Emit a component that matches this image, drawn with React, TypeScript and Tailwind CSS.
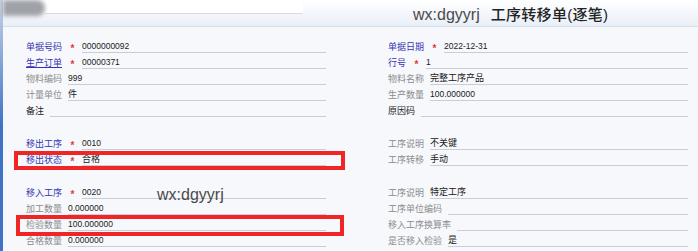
import React from "react";

type Tone = "blue" | "gray" | "black";

type FieldProps = {
  label: string;
  tone?: Tone;
  req?: boolean;
  link?: boolean;
  value?: string;
  num?: boolean;
};

const toneClass: Record<Tone, string> = {
  blue: "text-[#3434b4]",
  gray: "text-[#8c8c8c]",
  black: "text-[#222]",
};

function Field({ label, tone = "gray", req, link, value = "", num }: FieldProps) {
  return (
    <div className="flex h-[16px] items-end">
      <span
        className={`h-[11px] text-[9px] leading-[11px] whitespace-nowrap ${toneClass[tone]} ${
          link ? "underline underline-offset-1" : ""
        }`}
      >
        {label}
      </span>
      {req && (
        <span className="ml-[7px] h-[11px] w-[7px] text-center text-[10px] font-bold leading-[13px] text-[#e23b3b]">
          *
        </span>
      )}
      <div
        className={`ml-[6px] h-[12px] flex-1 border-b border-[#c9cdd7] leading-[11px] text-[#1a1a1a] ${
          num ? "text-[8.5px]" : "text-[9px]"
        }`}
      >
        {value}
      </div>
    </div>
  );
}

function Section({ left, right }: { left: FieldProps[]; right: FieldProps[] }) {
  return (
    <div className="grid grid-cols-[300px_300px] gap-x-[62px]">
      <div className="flex flex-col">
        {left.map((f, i) => (
          <Field key={i} {...f} />
        ))}
      </div>
      <div className="flex flex-col">
        {right.map((f, i) => (
          <Field key={i} {...f} />
        ))}
      </div>
    </div>
  );
}

export default function App() {
  return (
    <div
      className="relative flex h-[251px] w-[698px] overflow-hidden bg-[#f7f8fc]"
      style={{ fontFamily: '"Liberation Sans", "Noto Sans CJK SC", sans-serif' }}
    >
      {/* 左侧蓝条 */}
      <div className="w-[3px] shrink-0 bg-gradient-to-b from-[#c9d3e3] via-[#3f73c6] to-[#3f73c6]" />

      <div className="flex flex-1 flex-col">
        {/* 标题栏 */}
        <div className="flex h-[27px] items-start border-b border-[#d5dde9] bg-gradient-to-b from-white to-[#e9eff8]">
          <div className="h-[16px] w-[42px] rounded-r-lg bg-[#9fa2a8] blur-[2px]" />
          <div className="h-[14px] w-[258px] border-b border-[#d9dde3] bg-white" />
          <div className="ml-[110px] mt-[5px] flex items-baseline whitespace-nowrap">
            <span className="text-[16px] leading-[20px] text-[#4a4a4a]">wx:dgyyrj</span>
            <span className="ml-[11px] text-[15px] leading-[20px] font-medium tracking-[0.3px] text-[#222]">
              工序转移单(逐笔)
            </span>
          </div>
        </div>

        {/* 表单 */}
        <div className="flex flex-col gap-[17px] pl-[23px] pt-[10px]">
          <Section
            left={[
              { label: "单据号码", tone: "blue", req: true, value: "0000000092", num: true },
              { label: "生产订单", tone: "blue", req: true, link: true, value: "00000371", num: true },
              { label: "物料编码", value: "999", num: true },
              { label: "计量单位", value: "件" },
              { label: "备注", tone: "black" },
            ]}
            right={[
              { label: "单据日期", tone: "blue", req: true, value: "2022-12-31", num: true },
              { label: "行号", tone: "blue", req: true, value: "1", num: true },
              { label: "物料名称", value: "完整工序产品" },
              { label: "生产数量", value: "100.000000", num: true },
              { label: "原因码", tone: "black" },
            ]}
          />
          <Section
            left={[
              { label: "移出工序", tone: "blue", req: true, value: "0010", num: true },
              { label: "移出状态", tone: "blue", req: true, value: "合格" },
            ]}
            right={[
              { label: "工序说明", value: "不关键" },
              { label: "工序转移", value: "手动" },
            ]}
          />
          <Section
            left={[
              { label: "移入工序", tone: "blue", req: true, value: "0020", num: true },
              { label: "加工数量", value: "0.000000", num: true },
              { label: "检验数量", value: "100.000000", num: true },
              { label: "合格数量", value: "0.000000", num: true },
            ]}
            right={[
              { label: "工序说明", value: "特定工序" },
              { label: "工序单位编码" },
              { label: "移入工序换算率" },
              { label: "是否移入检验", value: "是" },
            ]}
          />
        </div>
      </div>

      {/* 标注框与水印 */}
      <div className="absolute left-[14px] top-[151px] h-[19px] w-[331px] border-[4px] border-[#f02626]" />
      <div className="absolute left-[16px] top-[215px] h-[21px] w-[328px] border-[4px] border-[#f02626]" />
      <div className="absolute left-[157px] top-[185px] text-[16px] leading-[20px] text-[#4a4a4a]">wx:dgyyrj</div>
    </div>
  );
}
